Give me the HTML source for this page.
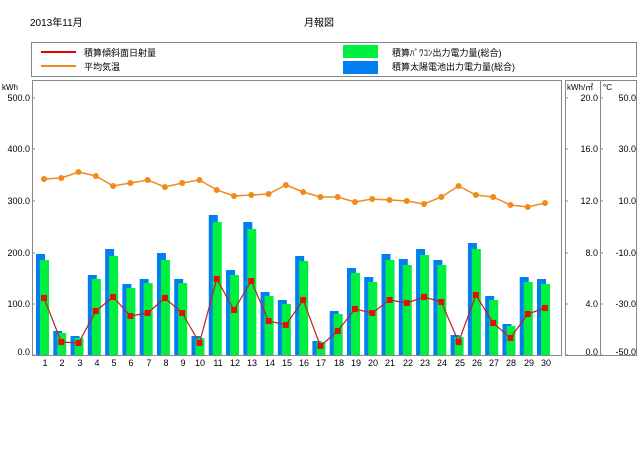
<!DOCTYPE html>
<html><head><meta charset="utf-8"><style>
body{margin:0;background:#fff;width:640px;height:453px;overflow:hidden}
svg text{font-family:"Liberation Sans","Noto Sans CJK JP",sans-serif;font-size:9px;fill:#000}
</style></head><body>
<svg id="s" width="640" height="453" viewBox="0 0 640 453" xmlns="http://www.w3.org/2000/svg">
<text x="30" y="26" style="font-size:10px">2013年11月</text>
<text x="304" y="26" style="font-size:10px">月報図</text>
<rect x="31.5" y="42.5" width="605" height="34" fill="none" stroke="#888" stroke-width="1"/>
<line x1="41" y1="52" x2="76" y2="52" stroke="#e00000" stroke-width="2"/>
<line x1="41" y1="66" x2="76" y2="66" stroke="#f08a1e" stroke-width="2"/>
<text x="84" y="56">積算傾斜面日射量</text>
<text x="84" y="70">平均気温</text>
<rect x="343" y="45" width="35" height="13" fill="#00f040"/>
<rect x="343" y="61" width="35" height="13" fill="#0080f0"/>
<text x="392" y="56">積算ﾊﾟﾜｺﾝ出力電力量(総合)</text>
<text x="392" y="70">積算太陽電池出力電力量(総合)</text>
<rect x="32.5" y="80.5" width="529" height="275" fill="none" stroke="#888"/>
<rect x="565.5" y="80.5" width="35" height="275" fill="none" stroke="#888"/>
<rect x="600.5" y="80.5" width="36" height="275" fill="none" stroke="#888"/>
<text x="2" y="90" style="font-size:8px">kWh</text>
<g text-anchor="end">
<text x="30" y="101">500.0</text><text x="30" y="152">400.0</text><text x="30" y="204">300.0</text><text x="30" y="256">200.0</text><text x="30" y="307">100.0</text><text x="30" y="355">0.0</text>
<text x="598" y="101">20.0</text><text x="598" y="152">16.0</text><text x="598" y="204">12.0</text><text x="598" y="256">8.0</text><text x="598" y="307">4.0</text><text x="598" y="355">0.0</text>
<text x="636" y="101">50.0</text><text x="636" y="152">30.0</text><text x="636" y="204">10.0</text><text x="636" y="256">-10.0</text><text x="636" y="307">-30.0</text><text x="636" y="355">-50.0</text>
</g>
<text x="567" y="90" style="font-size:8px">kWh/㎡</text>
<text x="603" y="90" style="font-size:8px">°C</text>
<g id="g"></g>
<g text-anchor="middle" id="lab">
<text x="45" y="366">1</text><text x="62" y="366">2</text><text x="80" y="366">3</text><text x="97" y="366">4</text><text x="114" y="366">5</text><text x="131" y="366">6</text><text x="149" y="366">7</text><text x="166" y="366">8</text><text x="183" y="366">9</text><text x="200" y="366">10</text><text x="218" y="366">11</text><text x="235" y="366">12</text><text x="252" y="366">13</text><text x="270" y="366">14</text><text x="287" y="366">15</text><text x="304" y="366">16</text><text x="321" y="366">17</text><text x="339" y="366">18</text><text x="356" y="366">19</text><text x="373" y="366">20</text><text x="390" y="366">21</text><text x="408" y="366">22</text><text x="425" y="366">23</text><text x="442" y="366">24</text><text x="460" y="366">25</text><text x="477" y="366">26</text><text x="494" y="366">27</text><text x="511" y="366">28</text><text x="529" y="366">29</text><text x="546" y="366">30</text>
</g>
</svg>
<script>
var B=[254,331,336,275,249,284,279,253,279,336,215,270,222,292,300,256,341,311,268,277,254,259,249,260,335,243,296,324,277,279];
var G=[260,333,338,279,256,288,283,260,283,338,222,275,229,296,304,261,342,314,273,282,260,265,255,265,337,249,300,326,282,284];
var R=[298,342,343,311,297,316,313,298,313,343,279,310,281,321,325,300,346,331,309,313,300,303,297,302,342,295,323,338,314,308];
var O=[179,178,172,176,186,183,180,187,183,180,190,196,195,194,185,192,197,197,202,199,200,201,204,197,186,195,197,205,207,203];
var h='',rp='',op='';
// ticks
[98,149,201,253,304,355].forEach(function(y){h+='<line x1="32" y1="'+y+'" x2="35" y2="'+y+'" stroke="#888"/><line x1="565" y1="'+y+'" x2="568" y2="'+y+'" stroke="#888"/><line x1="600" y1="'+y+'" x2="603" y2="'+y+'" stroke="#888"/>';});
for(var i=0;i<30;i++){var c=45+i*17.276;
h+='<rect x="'+(c-9)+'" y="'+B[i]+'" width="9" height="'+(355-B[i])+'" fill="#0080f0"/>';
h+='<rect x="'+(c-5)+'" y="'+G[i]+'" width="9" height="'+(355-G[i])+'" fill="#00f040"/>';
rp+=(c-1)+','+R[i]+' ';op+=(c-1)+','+O[i]+' ';}
h+='<polyline points="'+op+'" fill="none" stroke="#f08a1e" stroke-width="1.5"/>';
h+='<polyline points="'+rp+'" fill="none" stroke="#c02020" stroke-width="1.2"/>';
for(var i=0;i<30;i++){var c=45+i*17.276-1;
h+='<circle cx="'+c+'" cy="'+O[i]+'" r="3" fill="#f08a1e"/>';
h+='<rect x="'+(c-3)+'" y="'+(R[i]-3)+'" width="6" height="6" fill="#e01010"/>';}
document.getElementById('g').innerHTML=h;
</script>
</body></html>
